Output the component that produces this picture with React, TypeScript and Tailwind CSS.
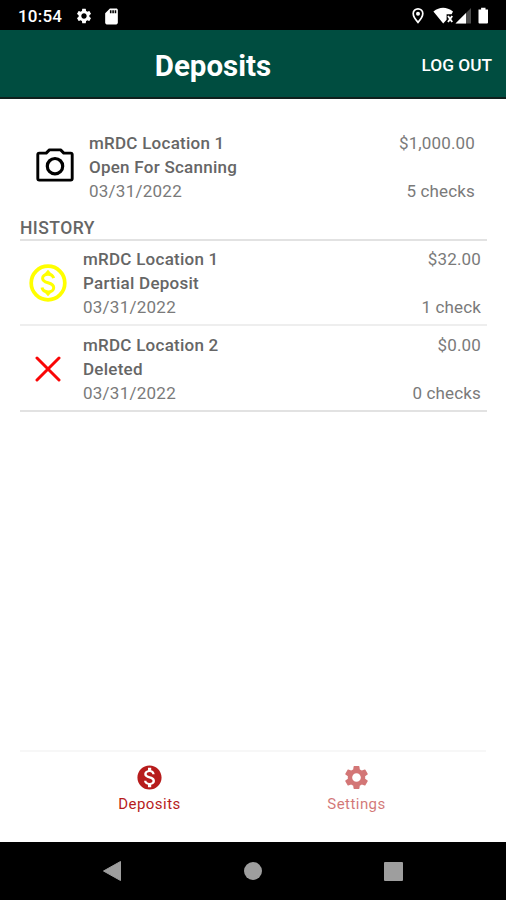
import React from 'react';
import { MdMonetizationOn, MdSdCard, MdSettings } from 'react-icons/md';

interface Deposit {
  id: string;
  location: string;
  status: string;
  date: string;
  amount: string;
  checks: string;
}

const openDeposit: Deposit = {
  id: 'open',
  location: 'mRDC Location 1',
  status: 'Open For Scanning',
  date: '03/31/2022',
  amount: '$1,000.00',
  checks: '5 checks',
};

const partialDeposit: Deposit = {
  id: 'partial',
  location: 'mRDC Location 1',
  status: 'Partial Deposit',
  date: '03/31/2022',
  amount: '$32.00',
  checks: '1 check',
};

const deletedDeposit: Deposit = {
  id: 'deleted',
  location: 'mRDC Location 2',
  status: 'Deleted',
  date: '03/31/2022',
  amount: '$0.00',
  checks: '0 checks',
};

const CameraIcon = () => (
  <svg width="38" height="34" viewBox="0 0 38 34" fill="none" stroke="#000" strokeWidth="2.9" strokeLinejoin="round" className="mb-[4px]">
    <path d="M3.3 5.1H10.2L13.4 1.9H24.6L27.8 5.1H34.7Q36.2 5.1 36.2 6.6V30.6Q36.2 32.1 34.7 32.1H3.3Q1.8 32.1 1.8 30.6V6.6Q1.8 5.1 3.3 5.1Z" />
    <circle cx="19" cy="18.2" r="7.7" strokeWidth="3.2" />
  </svg>
);

const PartialIcon = () => (
  <svg width="38" height="38" viewBox="0 0 38 38" fill="none" stroke="#ff0" className="mr-px">
    <circle cx="19" cy="19" r="16.8" strokeWidth="3.7" />
    <path d="M24.6 14.2C24 11.5 21.8 10.2 19 10.2C15.7 10.2 13.6 12 13.6 14.3C13.6 17.2 16.2 18 19 18.8C22.2 19.7 24.7 20.7 24.7 23.7C24.7 26.2 22.4 27.9 19.1 27.9C15.8 27.9 13.5 26.4 13 23.6" strokeWidth="3" />
    <path d="m19 5.8 3.8 4.2h-7.6ZM19 32.2l-3.8-4.2h7.6Z" fill="#ff0" stroke="none" />
  </svg>
);

const CrossIcon = () => (
  <svg width="26" height="26" viewBox="0 0 26 26" stroke="#f90606" strokeWidth="3" strokeLinecap="round" className="mr-px">
    <path d="M2 2 24 24M24 2 2 24" />
  </svg>
);

const StatusBar = () => (
  <div className="h-[30px] bg-black flex items-center justify-between pl-[18px] pr-[16px] text-white">
    <div className="flex items-center pt-[2px]">
      <span className="w-[57px] text-[17px] font-medium leading-none tracking-[0.2px]">10:54</span>
      <MdSettings className="h-[18px] w-[18px]" />
      <MdSdCard className="ml-[9px] h-[19px] w-[19px]" />
    </div>
    <svg width="79" height="18" viewBox="0 0 79 18" className="mt-px">
      {/* location */}
      <path d="M7 1.8a4.8 4.8 0 0 0-4.8 4.8C2.2 10.2 7 15.4 7 15.4s4.8-5.2 4.8-8.8A4.8 4.8 0 0 0 7 1.8Z" fill="none" stroke="#fff" strokeWidth="1.7" />
      <circle cx="7" cy="6.7" r="2" fill="#fff" />
      {/* wifi */}
      <path d="M22.4 4.4Q32-3 42 4.4L40.6 7.2H35.6V12.8L32.2 16.4Z" fill="#fff" />
      <path d="m37 9 4.2 6M41.2 9 37 15" stroke="#fff" strokeWidth="1.9" />
      {/* signal */}
      <path d="M44.5 16.5 60 1V16.5Z" fill="#4b4b4b" />
      <path d="M44.5 16.5 55 6V16.5Z" fill="#fff" />
      {/* battery */}
      <path d="M67.5 2.6h2.6V.8h4.4v1.8H77V15.5a1 1 0 0 1-1 1h-7.5a1 1 0 0 1-1-1Z" fill="#fff" />
    </svg>
  </div>
);

const DepositRow = ({ deposit, icon }: { deposit: Deposit; icon: React.ReactNode }) => (
  <div className="flex text-[17px] leading-6 text-[#7a7a7a]">
    <div className="w-[57px] flex items-center justify-center">{icon}</div>
    <div className="ml-[6px] flex-1 font-medium">
      <p className="tracking-[0.25px] text-[#666]">{deposit.location}</p>
      <p className="tracking-[0.25px] text-[#666]">{deposit.status}</p>
      <p className="font-normal tracking-[0.25px]">{deposit.date}</p>
    </div>
    <div className="flex flex-col justify-between text-right tracking-[0.15px]">
      <p>{deposit.amount}</p>
      <p>{deposit.checks}</p>
    </div>
  </div>
);

export default function App() {
  return (
    <div className="h-[900px] w-[506px] flex flex-col overflow-hidden bg-white font-[Roboto,sans-serif]">
      <StatusBar />

      {/* Header */}
      <header className="h-[69px] grid grid-cols-[1fr_auto_1fr] items-center border-b-2 border-[#10201d] bg-[#004d40] text-white">
        <span />
        <h1 className="-ml-[80px] pt-[7px] text-[29.5px] font-bold leading-none">Deposits</h1>
        <button className="justify-self-end pr-[14px] pt-[4px] text-[17.3px] font-medium leading-none">LOG OUT</button>
      </header>

      <main className="flex-1 flex flex-col pl-5 pr-[19px] pt-[32px]">
        <div className="pl-[6px] pr-[12px]">
          <DepositRow deposit={openDeposit} icon={<CameraIcon />} />
        </div>

        {/* History */}
        <h2 className="mt-[13px] h-[25px] border-b-2 border-[#e2e2e2] text-[17.5px] font-medium leading-6 tracking-[0.45px] text-[#666]">HISTORY</h2>
        <div className="border-b-2 border-[#eee] pr-[6px] pt-[6px] pb-[5px]">
          <DepositRow deposit={partialDeposit} icon={<PartialIcon />} />
        </div>
        <div className="border-b-2 border-[#e2e2e2] pr-[6px] pt-[7px] pb-[5px]">
          <DepositRow deposit={deletedDeposit} icon={<CrossIcon />} />
        </div>
      </main>

      {/* Bottom tabs */}
      <nav className="mx-5 h-[92px] flex justify-center border-t-2 border-[#f7f7f7] pt-[11px] text-[15px] leading-5 tracking-[0.45px] text-[#b71c1c]">
        <button className="w-[207px] flex flex-col items-center">
          <MdMonetizationOn className="h-[29px] w-[29px]" />
          <span className="mt-[2px]">Deposits</span>
        </button>
        <button className="w-[207px] flex flex-col items-center opacity-60">
          <MdSettings className="h-[29px] w-[29px]" />
          <span className="mt-[2px]">Settings</span>
        </button>
      </nav>

      {/* Android navigation */}
      <div className="h-[58px] flex items-center justify-between bg-black pl-[102px] pr-[103px] text-[#9e9e9e]">
        <svg width="20" height="22" viewBox="0 0 20 22" fill="currentColor">
          <path d="M1.5 11 18.5 1.5V20.5Z" stroke="currentColor" strokeLinejoin="round" />
        </svg>
        <div className="h-[18px] w-[18px] rounded-full bg-current" />
        <div className="h-[19px] w-[19px] rounded-[1px] bg-current" />
      </div>
    </div>
  );
}
